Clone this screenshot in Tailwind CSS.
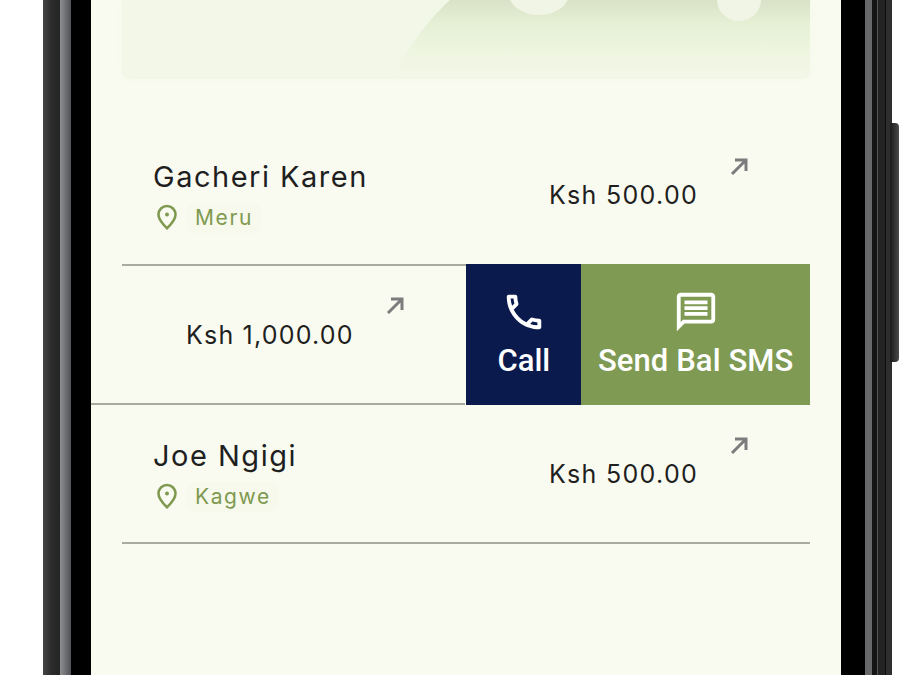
<!DOCTYPE html>
<html lang="en">
<head>
  <meta charset="UTF-8">
  <title>Customers</title>
  <script src="https://cdn.jsdelivr.net/npm/@tailwindcss/browser@4"></script>
</head>
<body class="bg-white h-[675px] w-[920px] overflow-hidden font-['Inter',sans-serif]">
  <div class="flex h-[675px] pl-[43px]">
    <!-- phone frame, left edge -->
    <div class="flex w-[48px] shrink-0">
      <div class="w-[17px] bg-gradient-to-r from-[#454545] via-[#2c2c2c] to-[#242424]"></div>
      <div class="w-[11px] bg-gradient-to-r from-[#8e9092] to-[#505255]"></div>
      <div class="w-[20px] bg-black"></div>
    </div>

    <!-- screen -->
    <div class="w-[750px] shrink-0 bg-[#f9fbf0] flex flex-col">
      <!-- hero card -->
      <div class="relative mx-[31px] h-[79px] shrink-0 overflow-hidden rounded-b-lg bg-[#f3f7e8] shadow-[0_0_6px_#f3f7e8]">
        <svg class="absolute inset-0 w-full h-full" viewBox="0 0 688 79" preserveAspectRatio="none">
          <defs>
            <linearGradient id="hero" x1="0" y1="0" x2="0" y2="1">
              <stop offset="0" stop-color="#d9e2c6"/>
              <stop offset="0.3" stop-color="#e6f0d5"/>
              <stop offset="0.65" stop-color="#eef5e0"/>
              <stop offset="1" stop-color="#f3f7e8"/>
            </linearGradient>
          </defs>
          <path d="M271 79C285 50 300 26 328 0H688V79Z" fill="url(#hero)"/>
          <ellipse cx="417" cy="-6" rx="30" ry="21" fill="#f1f5e6"/>
          <ellipse cx="617" cy="0" rx="22" ry="21" fill="#f1f5e6"/>
        </svg>
      </div>

      <!-- row 1 -->
      <div class="mx-[31px] h-[187px] shrink-0 flex border-b-2 border-[#a9ab9f]">
        <div class="flex-1 pl-[31px] pt-[80px]">
          <p class="text-[29px] leading-[36px] tracking-[1.5px] text-[#1f1f1f]">Gacheri Karen</p>
          <div class="flex items-start mt-[5px]">
            <svg class="w-[32px] h-[32px] -ml-[2px] text-[#7f9a50]" viewBox="0 0 24 24" fill="none" stroke="currentColor" stroke-width="1.9">
              <path d="M12 21.2C8.2 17.6 5.6 14.6 5.6 10.9a6.4 6.4 0 0 1 12.8 0c0 3.7-2.6 6.7-6.4 10.3Z"/>
              <circle cx="12" cy="10.8" r="1.5" fill="currentColor" stroke="none"/>
            </svg>
            <span class="ml-[4px] mt-[3px] px-[8px] leading-[30px] rounded-lg bg-[#f6f9ec] text-[21px] tracking-[1.6px] text-[#7f9a50]">Meru</span>
          </div>
        </div>
        <div class="relative w-[344px]">
          <span class="absolute left-[83px] top-[100px] text-[25px] leading-[32px] tracking-[1.3px] text-[#1f1f1f]">Ksh 500.00</span>
          <svg class="absolute left-[261px] top-[76px] w-[24px] h-[24px] text-[#7c7c7c]" viewBox="0 0 24 24" fill="none" stroke="currentColor" stroke-width="3">
            <path d="M5 19 18 6M8 5h11v11"/>
          </svg>
        </div>
      </div>

      <!-- row 2, swiped open -->
      <div class="relative -mt-[2px] mr-[31px] h-[141px] shrink-0 flex">
        <div class="relative w-[375px] border-b-2 border-[#a9ab9f]">
          <span class="absolute left-[95px] top-[55px] text-[25px] leading-[32px] tracking-[1.2px] text-[#1f1f1f]">Ksh 1,000.00</span>
          <svg class="absolute left-[292px] top-[30px] w-[24px] h-[24px] text-[#7c7c7c]" viewBox="0 0 24 24" fill="none" stroke="currentColor" stroke-width="3">
            <path d="M5 19 18 6M8 5h11v11"/>
          </svg>
        </div>
        <div class="w-[115px] ml-[1px] bg-[#0b1a4c] flex flex-col items-center pt-[25px] text-white font-['Roboto',sans-serif]">
          <svg class="w-[46px] h-[46px]" viewBox="0 0 24 24" fill="currentColor">
            <path d="M6.54 5c.06.89.21 1.76.45 2.59l-1.2 1.2c-.41-1.2-.67-2.47-.76-3.79h1.51m9.86 12.02c.85.24 1.72.39 2.6.45v1.49c-1.32-.09-2.59-.35-3.8-.75l1.2-1.19M7.5 3H4c-.55 0-1 .45-1 1 0 9.39 7.61 17 17 17 .55 0 1-.45 1-1v-3.49c0-.55-.45-1-1-1-1.24 0-2.45-.2-3.57-.57-.1-.04-.21-.05-.31-.05-.26 0-.51.1-.71.29l-2.2 2.2c-2.83-1.45-5.15-3.76-6.59-6.59l2.2-2.2c.28-.28.36-.67.25-1.02C8.7 6.45 8.5 5.25 8.5 4c0-.55-.45-1-1-1z"/>
          </svg>
          <span class="mt-[8px] text-[31px] leading-[36px] font-medium">Call</span>
        </div>
        <div class="w-[229px] bg-[#7f9a53] flex flex-col items-center pt-[27px] text-white font-['Roboto',sans-serif]">
          <svg class="w-[46px] h-[46px] -mt-[2px]" viewBox="0 0 24 24" fill="currentColor">
            <path d="M20 2H4c-1.1 0-2 .9-2 2v18l4-4h14c1.1 0 2-.9 2-2V4c0-1.1-.9-2-2-2zm0 14H5.2L4 17.2V4h16v12zM6 12h12v2H6zm0-3h12v2H6zm0-3h12v2H6z"/>
          </svg>
          <span class="mt-[8px] text-[31px] leading-[36px] font-medium tracking-[0.1px] whitespace-nowrap">Send Bal SMS</span>
        </div>
      </div>

      <!-- row 3 -->
      <div class="mx-[31px] h-[139px] shrink-0 flex border-b-2 border-[#a9ab9f]">
        <div class="flex-1 pl-[31px] pt-[33px]">
          <p class="text-[29px] leading-[36px] tracking-[1.5px] text-[#1f1f1f]">Joe Ngigi</p>
          <div class="flex items-start mt-[5px]">
            <svg class="w-[32px] h-[32px] -ml-[2px] text-[#7f9a50]" viewBox="0 0 24 24" fill="none" stroke="currentColor" stroke-width="1.9">
              <path d="M12 21.2C8.2 17.6 5.6 14.6 5.6 10.9a6.4 6.4 0 0 1 12.8 0c0 3.7-2.6 6.7-6.4 10.3Z"/>
              <circle cx="12" cy="10.8" r="1.5" fill="currentColor" stroke="none"/>
            </svg>
            <span class="ml-[4px] mt-[3px] px-[8px] leading-[30px] rounded-lg bg-[#f6f9ec] text-[21px] tracking-[1.6px] text-[#7f9a50]">Kagwe</span>
          </div>
        </div>
        <div class="relative w-[344px]">
          <span class="absolute left-[83px] top-[53px] text-[25px] leading-[32px] tracking-[1.3px] text-[#1f1f1f]">Ksh 500.00</span>
          <svg class="absolute left-[261px] top-[29px] w-[24px] h-[24px] text-[#7c7c7c]" viewBox="0 0 24 24" fill="none" stroke="currentColor" stroke-width="3">
            <path d="M5 19 18 6M8 5h11v11"/>
          </svg>
        </div>
      </div>
    </div>

    <!-- phone frame, right edge -->
    <div class="relative flex w-[51px] shrink-0">
      <div class="w-[24px] bg-black"></div>
      <div class="w-[7px] bg-[#666869]"></div>
      <div class="w-[5px] bg-[#141414]"></div>
      <div class="w-[1px] bg-[#555555]"></div>
      <div class="w-[7px] bg-[#232323]"></div>
      <div class="w-[1px] bg-[#0c0c0c]"></div>
      <div class="w-[6px] bg-[#2e2e2e]"></div>
      <div class="absolute left-[49px] top-[123px] h-[239px] w-[9px] rounded-r-sm bg-gradient-to-r from-[#1a1a1a] to-[#4a4a4a]"></div>
    </div>
  </div>
</body>
</html>
